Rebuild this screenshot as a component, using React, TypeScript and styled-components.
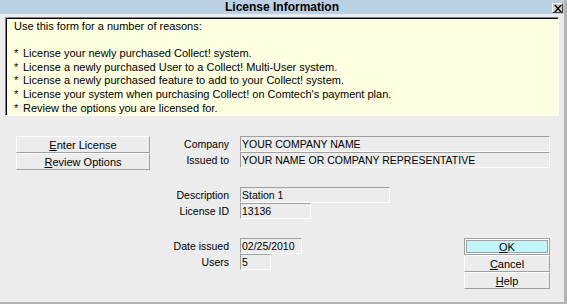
import React from 'react';
import styled, { createGlobalStyle } from 'styled-components';

const reasons = [
  'License your newly purchased Collect! system.',
  'License a newly purchased User to a Collect! Multi-User system.',
  'License a newly purchased feature to add to your Collect! system.',
  "License your system when purchasing Collect! on Comtech's payment plan.",
  'Review the options you are licensed for.',
];

const App = () => {
  return (
    <Window>
      <GlobalStyle />
      <TitleBar>
        <Title>License Information</Title>
        <CloseButton aria-label="Close">
          <svg width="8" height="7" viewBox="0 0 8 7">
            <path d="M0 0h2l2 2.4L6 0h2L5 3.5 8 7H6L4 4.6 2 7H0l3-3.5z" fill="#000" />
          </svg>
        </CloseButton>
      </TitleBar>

      <InfoPanel>
        <InfoLine>Use this form for a number of reasons:</InfoLine>
        <InfoLine>&nbsp;</InfoLine>
        {reasons.map((reason) => (
          <InfoLine key={reason}>
            <Star>*</Star>
            {reason}
          </InfoLine>
        ))}
      </InfoPanel>

      <Body>
        <SideButtons>
          <Button>
            <u>E</u>nter License
          </Button>
          <Button>
            <u>R</u>eview Options
          </Button>
        </SideButtons>

        <Form>
          <FieldGroup>
            <Row>
              <Label>Company</Label>
              <Field $width={310}>YOUR COMPANY NAME</Field>
            </Row>
            <Row>
              <Label>Issued to</Label>
              <Field $width={310}>YOUR NAME OR COMPANY REPRESENTATIVE</Field>
            </Row>
          </FieldGroup>

          <FieldGroup>
            <Row>
              <Label>Description</Label>
              <Field $width={150}>Station 1</Field>
            </Row>
            <Row>
              <Label>License ID</Label>
              <Field $width={71}>13136</Field>
            </Row>
          </FieldGroup>

          <BottomRow>
            <FieldGroup>
              <Row>
                <Label>Date issued</Label>
                <Field $width={62}>02/25/2010</Field>
              </Row>
              <Row>
                <Label>Users</Label>
                <Field $width={31}>5</Field>
              </Row>
            </FieldGroup>

            <DialogButtons>
              <Button $primary>
                <u>O</u>K
              </Button>
              <Button>
                <u>C</u>ancel
              </Button>
              <Button>
                <u>H</u>elp
              </Button>
            </DialogButtons>
          </BottomRow>
        </Form>
      </Body>
    </Window>
  );
};

export default App;

const GlobalStyle = createGlobalStyle`
  html, body {
    margin: 0;
    padding: 0;
    background: #ececec;
  }
`;

const Window = styled.div`
  position: relative;
  width: 567px;
  height: 304px;
  box-sizing: border-box;

  background-color: #ececec;
  border-right: 3px solid #b4b4b4;
  border-bottom: 2px solid #b4b4b4;

  font-family: 'Liberation Sans', Arial, sans-serif;
  color: #000000;
  overflow: hidden;
`;

const TitleBar = styled.div`
  position: relative;
  display: flex;
  justify-content: center;
  align-items: center;

  height: 14px;
  background-color: #bcd0e3;
`;

const Title = styled.div`
  font-size: 12px;
  font-weight: 700;
  line-height: 14px;
`;

const CloseButton = styled.div`
  position: absolute;
  top: 3px;
  right: 1px;

  display: flex;
  align-items: center;
  justify-content: center;

  width: 11px;
  height: 10px;
  box-sizing: border-box;

  background-color: #d4d0c8;
  border: 1px solid;
  border-color: #ffffff #404040 #404040 #ffffff;
`;

const InfoPanel = styled.div`
  height: 99px;
  margin: 3px 5px 0 5px;
  padding: 2px 0 0 8px;
  box-sizing: border-box;

  background-color: #ffffe1;
  border: 1px solid;
  border-color: #808080 #ffffff #ffffff #808080;
  box-shadow: inset 1px 1px 0 #000000;
`;

const InfoLine = styled.div`
  font-size: 11px;
  line-height: 13.6px;
  white-space: pre;
`;

const Star = styled.span`
  display: inline-block;
  width: 9px;
`;

const Body = styled.div`
  display: flex;
  padding-top: 20px;
`;

const SideButtons = styled.div`
  display: flex;
  flex-direction: column;

  width: 134px;
  margin-left: 16px;
`;

const Button = styled.div<{ $primary?: boolean }>`
  display: flex;
  align-items: center;
  justify-content: center;

  height: 17px;
  box-sizing: border-box;

  font-size: 11px;
  background-color: ${(p) => (p.$primary ? '#c2f6fb' : '#ececec')};
  border: 1px solid;
  border-color: ${(p) =>
    p.$primary ? '#a0a0a0' : '#ffffff #a0a0a0 #a0a0a0 #ffffff'};
  box-shadow: ${(p) =>
    p.$primary ? 'inset 0 0 0 1px #ffffff, inset 0 0 0 2px #a0a0a0' : 'none'};

  u {
    text-decoration-thickness: 1px;
    text-underline-offset: 1px;
  }
`;

const Form = styled.div`
  display: flex;
  flex-direction: column;
  gap: 19px;
  flex: 1;
`;

const FieldGroup = styled.div`
  display: flex;
  flex-direction: column;
`;

const Row = styled.div`
  display: flex;
  align-items: center;
  gap: 11px;
  height: 16px;
`;

const Label = styled.div`
  width: 79px;
  text-align: right;
  font-size: 10.5px;
`;

const Field = styled.div<{ $width: number }>`
  width: ${(p) => p.$width}px;
  height: 16px;
  padding-left: 1px;
  box-sizing: border-box;

  font-size: 10.5px;
  line-height: 14px;
  white-space: nowrap;

  border: 1px solid;
  border-color: #a0a0a0 #ffffff #ffffff #a0a0a0;
`;

const BottomRow = styled.div`
  display: flex;
  justify-content: space-between;
  align-items: flex-start;
`;

const DialogButtons = styled.div`
  display: flex;
  flex-direction: column;

  width: 86px;
  margin-right: 14px;
`;
